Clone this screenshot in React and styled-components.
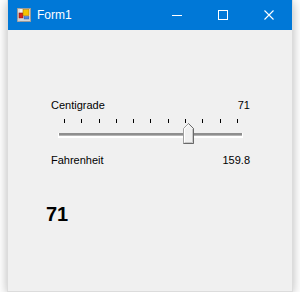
import React from 'react';
import styled, { createGlobalStyle } from 'styled-components';

const GlobalStyle = createGlobalStyle`
  html, body {
    margin: 0;
    padding: 0;
    background: #ffffff;
  }
  body {
    font-family: "Liberation Sans", Arial, sans-serif;
  }
`;

const Window = styled.div`
  margin-left: 7px;
  width: 284px;
  height: 291px;
  border: 1px solid #dcdcdc;
  border-top: none;
  background: #f0f0f0;
  box-shadow: 0 2px 10px rgba(0, 0, 0, 0.28);
  display: flex;
  flex-direction: column;
`;

const TitleBar = styled.div`
  height: 30px;
  background: #0078d7;
  display: flex;
  align-items: center;
  padding-left: 9px;
  color: #ffffff;
`;

const Title = styled.span`
  margin-left: 6px;
  font-size: 12px;
  line-height: 14px;
`;

const Caption = styled.div`
  margin-left: auto;
  display: flex;
  height: 100%;
`;

const CaptionButton = styled.div`
  width: 46px;
  height: 100%;
  display: flex;
  align-items: center;
  justify-content: center;
`;

const Client = styled.div`
  flex: 1;
  padding-top: 69px;
  display: flex;
  flex-direction: column;
`;

const Row = styled.div`
  margin: ${(p) => p.$top || 0}px 0 0 43px;
  width: 199px;
  display: flex;
  justify-content: space-between;
  font-size: 11px;
  line-height: 13px;
  color: #000;
`;

const Slider = styled.div`
  position: relative;
  margin: 7px 0 0 51px;
  width: 183px;
  height: 25px;
`;

const Ticks = styled.div`
  display: flex;
  justify-content: space-between;
  padding: 0 4px 0 5px;
  height: 4px;
`;

const Tick = styled.span`
  width: 1px;
  height: 4px;
  background: #000;
`;

const Track = styled.div`
  margin-top: 10px;
  height: 2px;
  background: #8e8e8e;
  border-bottom: 1px solid #b4b4b4;
  box-shadow: 0 1px 0 1px #ffffff;
`;

const Thumb = styled.svg`
  position: absolute;
  top: 4px;
`;

const BigValue = styled.div`
  margin: 36px 0 0 38px;
  font-size: 20px;
  line-height: 23px;
  font-weight: bold;
  color: #000;
`;

const FormIcon = () => (
  <svg width="14" height="14" viewBox="0 0 14 14">
    <rect x="0.5" y="0.5" width="13" height="13" fill="#f4f4f4" stroke="#9a9a9a" />
    <line x1="0.5" y1="12" x2="13.5" y2="12" stroke="#b8b8b8" />
    <line x1="2" y1="0.5" x2="2" y2="13.5" stroke="#c8c8c8" />
    <rect x="2" y="5" width="4" height="5" fill="#d8261c" stroke="#8a1410" strokeWidth="0.6" />
    <rect x="6" y="1.5" width="6" height="6" fill="#f5c400" stroke="#b07a00" strokeWidth="0.6" />
    <rect x="7" y="8.5" width="5" height="2.5" fill="#4a86e0" stroke="#2a5aa8" strokeWidth="0.5" />
  </svg>
);

const App = () => {
  const celsius = 71;
  const fahrenheit = (celsius * 9) / 5 + 32;
  const ticks = Array.from({ length: 11 });
  const thumbLeft = 5 + (celsius / 100) * 174 - 5;

  return (
    <>
      <GlobalStyle />
      <Window>
        <TitleBar>
          <FormIcon />
          <Title>Form1</Title>
          <Caption>
            <CaptionButton>
              <svg width="10" height="10" viewBox="0 0 10 10">
                <line x1="0" y1="5.5" x2="10" y2="5.5" stroke="#fff" strokeWidth="1" />
              </svg>
            </CaptionButton>
            <CaptionButton>
              <svg width="10" height="10" viewBox="0 0 10 10">
                <rect x="0.5" y="0.5" width="9" height="9" fill="none" stroke="#fff" strokeWidth="1" />
              </svg>
            </CaptionButton>
            <CaptionButton>
              <svg width="10" height="10" viewBox="0 0 10 10">
                <path d="M0.5 0.5 L9.5 9.5 M9.5 0.5 L0.5 9.5" stroke="#fff" strokeWidth="1.1" />
              </svg>
            </CaptionButton>
          </Caption>
        </TitleBar>
        <Client>
          <Row>
            <span>Centigrade</span>
            <span>{celsius}</span>
          </Row>
          <Slider>
            <Ticks>
              {ticks.map((_, i) => (
                <Tick key={i} />
              ))}
            </Ticks>
            <Track />
            <Thumb width="11" height="21" viewBox="0 0 11 21" style={{ left: thumbLeft }}>
              <polygon points="0.5,5.5 5.5,0.5 10.5,5.5 10.5,20.5 0.5,20.5" fill="#f0f0f0" stroke="#a0a0a0" />
              <polyline points="1.5,20 1.5,5.9 5.5,1.9" fill="none" stroke="#ffffff" />
              <polyline points="9.5,5.9 9.5,19.5 1.5,19.5" fill="none" stroke="#c8c8c8" />
              <polyline points="5.5,0.5 10.5,5.5 10.5,20.5 0.5,20.5" fill="none" stroke="#696969" />
            </Thumb>
          </Slider>
          <Row $top={10}>
            <span>Fahrenheit</span>
            <span>{fahrenheit.toFixed(1)}</span>
          </Row>
          <BigValue>{celsius}</BigValue>
        </Client>
      </Window>
    </>
  );
};

export default App;
